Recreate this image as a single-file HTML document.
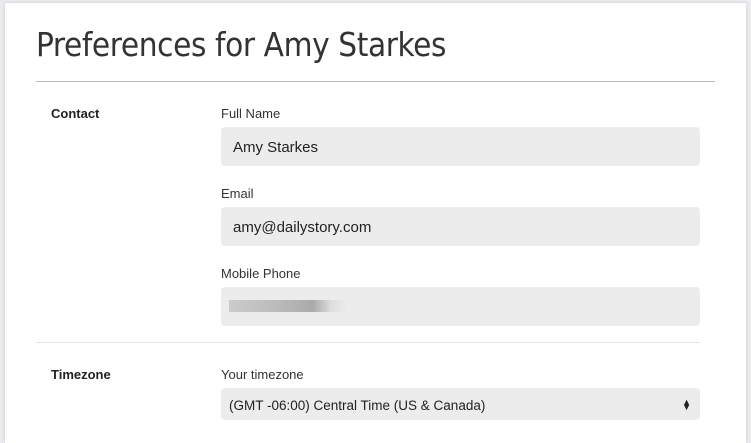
<!DOCTYPE html>
<html><head><style>
body{margin:0;width:751px;height:429px;overflow:hidden;background:#e9ebee;font-family:"Liberation Sans",Arial,sans-serif;}
.card{position:absolute;left:5px;top:3px;width:741px;height:440px;background:#fff;box-shadow:0 0 3px rgba(0,0,0,.15);}
.abs{position:absolute;}
h1{position:absolute;left:36px;top:25px;margin:0;font-weight:normal;font-size:33px;color:#333;letter-spacing:-0.4px;font-family:"DejaVu Sans Condensed","Liberation Sans Narrow","Liberation Sans",sans-serif;}
.sec{font-size:13px;font-weight:bold;color:#222;left:51px;}
.lab{font-size:13px;color:#333;left:221px;}
.inp{left:221px;width:479px;height:39px;background:#ececec;border-radius:4px;font-size:15px;color:#222;line-height:42px;box-sizing:border-box;padding-left:12px;}
</style></head><body>
<div class="card"></div>
<h1>Preferences for Amy Starkes</h1>
<div class="abs" style="left:36px;top:81px;width:679px;height:1px;background:#bbb"></div>
<div class="abs sec" style="top:106px">Contact</div>
<div class="abs lab" style="top:106px">Full Name</div>
<div class="abs inp" style="top:127px">Amy Starkes</div>
<div class="abs lab" style="top:186px">Email</div>
<div class="abs inp" style="top:207px">amy@dailystory.com</div>
<div class="abs lab" style="top:266px">Mobile Phone</div>
<div class="abs inp" style="top:287px"><div class="abs" style="left:8px;top:13px;width:120px;height:12px;background:linear-gradient(90deg,#ccc,#bbb 40%,#aaa 70%,#ddd 85%,#eee)"></div></div>
<div class="abs" style="left:36px;top:342px;width:664px;height:1px;background:#e5e5e5"></div>
<div class="abs sec" style="top:367px">Timezone</div>
<div class="abs lab" style="top:367px">Your timezone</div>
<div class="abs inp" style="top:388px;height:32px;line-height:36px;font-size:13.5px;padding-left:8px">(GMT -06:00) Central Time (US &amp; Canada)<span class="abs" style="right:9px;font-size:9px;line-height:1;top:10px">▲<br><span style="position:relative;top:-4px">▼</span></span></div>
</body></html>
